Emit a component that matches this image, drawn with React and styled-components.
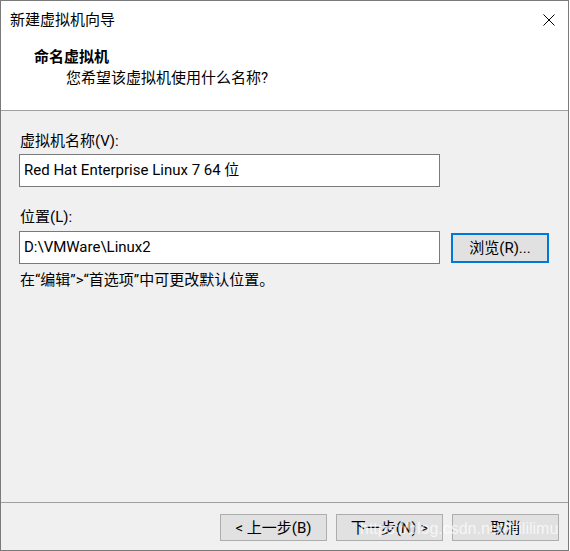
import React from "react";
import styled, { createGlobalStyle } from "styled-components";

const Global = createGlobalStyle`
  html, body { margin: 0; padding: 0; background: #ffffff; }
  * { box-sizing: border-box; }
`;

const FONT = `Roboto, "Noto Sans CJK SC", sans-serif`;

const Window = styled.div`
  position: relative;
  width: 569px;
  height: 551px;
  border: 1px solid #7a7a7a;
  display: flex;
  flex-direction: column;
  background: #f0f0f0;
  font-family: ${FONT};
  font-size: 15px;
  line-height: 20px;
  color: #000;
`;

const Header = styled.div`
  height: 110px;
  background: #ffffff;
  border-bottom: 1px solid #a0a0a0;
  display: flex;
  flex-direction: column;
`;

const TitleBar = styled.div`
  height: 37px;
  display: flex;
  align-items: center;
  justify-content: space-between;
  padding: 0 13px 0 9px;
`;

const Title = styled.span`
  font-size: 15px;
`;

const Heading = styled.div`
  margin-top: 9px;
  padding-left: 33px;
  font-weight: 700;
`;

const SubHeading = styled.div`
  margin-top: 1px;
  padding-left: 65px;
`;

const Body = styled.div`
  flex: 1;
  padding: 20px 0 0 18px;
  display: flex;
  flex-direction: column;
`;

const Label = styled.div`
  margin-top: ${(p) => p.$top || 0}px;
  padding-left: 1px;
`;

const Row = styled.div`
  display: flex;
  align-items: center;
  gap: 11px;
  margin-top: ${(p) => p.$top || 0}px;
`;

const TextBox = styled.div`
  width: 421px;
  height: 33px;
  border: 1px solid #7a7a7a;
  background: #ffffff;
  display: flex;
  align-items: center;
  padding: 0 0 2px 4px;
  white-space: nowrap;
`;

const Button = styled.div`
  width: ${(p) => p.$w || 107}px;
  height: ${(p) => p.$h || 27}px;
  background: #e1e1e1;
  border: ${(p) => (p.$focus ? "2px solid #0078d7" : "1px solid #adadad")};
  display: flex;
  align-items: center;
  justify-content: center;
  white-space: nowrap;
`;

const Hint = styled.div`
  margin-top: 6px;
  padding-left: 1px;
`;

const Footer = styled.div`
  height: 48px;
  border-top: 1px solid #a0a0a0;
  display: flex;
  justify-content: flex-end;
  gap: 9px;
  padding: 11px 9px 0 0;
`;

const Watermark = styled.div`
  position: absolute;
  left: 359px;
  top: 518px;
  font-family: "Liberation Sans", Arial, sans-serif;
  font-size: 16px;
  line-height: 20px;
  color: rgba(255, 255, 255, 0.72);
  white-space: nowrap;
  pointer-events: none;
`;

const CloseIcon = () => (
  <svg width="12" height="12" viewBox="0 0 12 12">
    <path d="M0.5 0.5 L11.5 11.5 M11.5 0.5 L0.5 11.5" stroke="#000" strokeWidth="1" fill="none" />
  </svg>
);

export default function App() {
  return (
    <>
      <Global />
      <Window>
        <Header>
          <TitleBar>
            <Title>新建虚拟机向导</Title>
            <CloseIcon />
          </TitleBar>
          <Heading>命名虚拟机</Heading>
          <SubHeading>您希望该虚拟机使用什么名称?</SubHeading>
        </Header>
        <Body>
          <Label>虚拟机名称(V):</Label>
          <Row $top={3}>
            <TextBox>Red Hat Enterprise Linux 7 64 位</TextBox>
          </Row>
          <Label $top={20}>位置(L):</Label>
          <Row $top={4}>
            <TextBox>D:\VMWare\Linux2</TextBox>
            <Button $w={98} $h={30} $focus>浏览(R)...</Button>
          </Row>
          <Hint>在“编辑”&gt;“首选项”中可更改默认位置。</Hint>
        </Body>
        <Footer>
          <Button>&lt; 上一步(B)</Button>
          <Button>下一步(N) &gt;</Button>
          <Button>取消</Button>
        </Footer>
        <Watermark>https://blog.csdn.net/lilililimu</Watermark>
      </Window>
    </>
  );
}
